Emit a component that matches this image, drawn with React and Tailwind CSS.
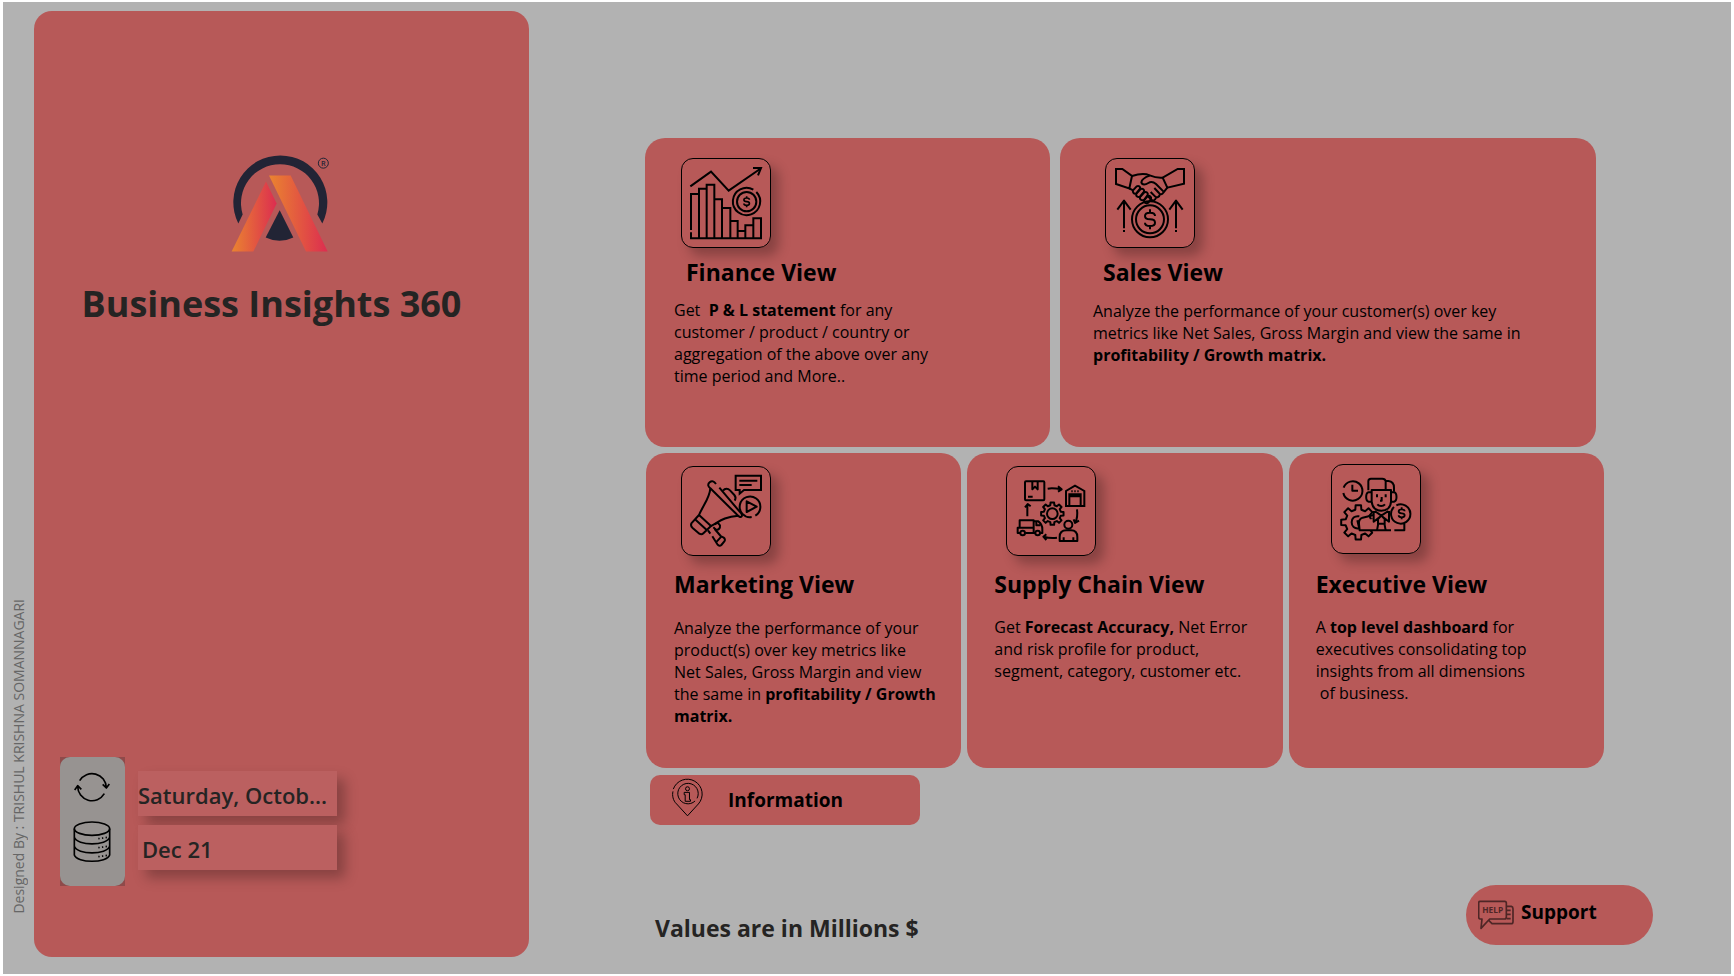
function gearPath(cx, cy, inner, outer, teeth) {
  const step = (Math.PI * 2) / teeth;
  const points = [];
  for (let i = 0; i < teeth; i += 1) {
    const a = i * step - Math.PI / 2;
    [
      [inner, -0.3],
      [outer, -0.2],
      [outer, 0.2],
      [inner, 0.3],
    ].forEach(([r, k]) => {
      points.push(`${(cx + r * Math.cos(a + k * step)).toFixed(1)} ${(cy + r * Math.sin(a + k * step)).toFixed(1)}`);
    });
  }
  return `M${points.join("L")}Z`;
}

const SUPPLY_GEAR = gearPath(172, 176, 26, 34, 8);
const EXEC_GEAR = gearPath(115, 202, 39, 52, 8);

function Glyph({ viewBox, children, className = "size-[88px]", strokeWidth = 6 }) {
  return (
    <svg
      viewBox={viewBox}
      className={className}
      fill="none"
      stroke="currentColor"
      strokeWidth={strokeWidth}
      strokeLinejoin="round"
      aria-hidden="true"
    >
      {children}
    </svg>
  );
}

function Dollar({ x, y, s = 1, w = 6 }) {
  return (
    <g transform={`translate(${x} ${y}) scale(${s})`} strokeWidth={w}>
      <path d="M15 -10C15 -17 9 -20 0 -20C-9 -20 -15 -16 -15 -10C-15 -3 -8 0 0 0C8 0 15 3 15 10C15 16 9 20 0 20C-9 20 -15 17 -15 10M0 -30V-20M0 20V30" />
    </g>
  );
}

function FinanceIcon() {
  return (
    <Glyph viewBox="36 27 264 264">
      <g strokeLinejoin="miter">
        <path d="M61 109L123 65L176 122L270 57" />
        <path d="M249 54H273L264 76" />
        <path d="M63 240V132H87M87 265V116H110M110 265V104H133V265M133 148H156V265M156 174H181V265M181 213H203V265M203 243H226M226 265V226H250M250 265V205H273V265H63V247" />
      </g>
      <path d="M250 119A41 41 0 1 0 259 126" />
      <circle cx="230" cy="155" r="29" />
      <Dollar x={230} y={155} s={0.55} w={9} />
    </Glyph>
  );
}

function SalesIcon() {
  return (
    <Glyph viewBox="33 27 264 264">
      <path strokeLinejoin="miter" d="M63 57H82L111 78L103 115L63 102Z" />
      <path strokeLinejoin="miter" d="M267 57H248L203 83L217 113L267 101Z" />
      <path d="M111 78C130 72 150 70 164 76C178 82 190 84 203 83" />
      <path d="M164 77C150 82 140 88 139 97C141 106 152 104 160 99C168 94 177 97 183 102L205 124" />
      <path d="M217 113L205 128C202 134 196 134 192 129L178 114M195 132C193 142 185 145 180 139L167 126M183 142C181 152 173 154 168 148L159 139" />
      <path d="M103 115L114 121" />
      <path d="M114 121L125 109C131 106 137 110 135 116L124 130C117 133 112 128 114 121Z" />
      <path d="M124 131L137 117C143 114 149 119 147 125L135 140C128 143 122 138 124 131Z" />
      <path d="M135 141L148 127C154 124 160 129 158 135L147 150C140 153 133 148 135 141Z" />
      <path d="M147 151L158 138C164 136 170 141 168 147L160 158C153 162 146 158 147 151Z" />
      <circle cx="165" cy="208" r="54" />
      <circle cx="165" cy="208" r="42" />
      <Dollar x={165} y={208} />
      <path d="M87 154V235M67 179L87 152L107 179M87 240V246M243 154V235M223 179L243 152L263 179M243 240V246" />
    </Glyph>
  );
}

function MarketingIcon() {
  return (
    <Glyph viewBox="36 36 264 264">
      <path strokeLinejoin="miter" d="M197 62H273V105H222L209 116V105H197Z" />
      <path d="M208 77H262M208 90H245" />
      <path d="M245 186A31 31 0 1 1 256 182" />
      <path d="M230 139L260 155L230 171Z" />
      <path d="M138 87C132 79 126 76 119 82C112 88 114 94 121 100L200 178C206 185 212 188 215 184C218 180 214 175 209 170L148 98" />
      <path d="M159 107C165 99 174 100 180 106L193 120C198 126 198 131 194 137" />
      <path d="M121 100C119 130 97 155 87 180L123 213C145 202 160 185 205 182" />
      <path d="M87 180L64 205C62 210 63 214 67 218L88 236C93 239 97 238 101 234L123 213M75 193L111 226" />
      <path d="M134 208L143 203L150 211C151 219 146 226 138 224L130 217" />
      <path d="M114 226L121 236M127 244L143 269C146 273 151 273 154 270L163 259C166 255 165 251 161 248L152 243L134 222M140 260L154 245" />
    </Glyph>
  );
}

function SupplyChainIcon() {
  return (
    <Glyph viewBox="36 36 264 264" strokeWidth={6}>
      <rect x="90" y="79" width="58" height="57" rx="3" />
      <path d="M112 80V103L120 95L128 103V80M99 125H113" />
      <path d="M158 101C170 99 182 100 199 103M189 94L200 103L189 110" />
      <path strokeLinejoin="miter" d="M213 153V108L240 92L268 108V153ZM223 153V118H257V153M223 124H257" />
      <path d="M229 109H233M238 109H242M247 109H251" />
      <path d="M246 163C248 178 247 190 241 203M236 193L240 204L252 197" />
      <circle cx="220" cy="209" r="12" />
      <path d="M194 258V246C194 232 203 226 214 226H228C239 226 247 232 247 246V258ZM206 247V258M235 247V258" />
      <path d="M186 248C172 250 160 249 146 245M154 238L145 245L154 255" />
      <path d="M97 184V150M90 157L98 147L107 154" />
      <path d="M76 234H68V218H118M74 218V196H116V234M91 234H120M116 199H130C138 205 142 213 142 222V234H136M124 199V211H136" />
      <circle cx="83" cy="234" r="7" />
      <circle cx="128" cy="234" r="7" />
      <path d={SUPPLY_GEAR} />
      <circle cx="172" cy="176" r="16" />
    </Glyph>
  );
}

function ExecutiveIcon() {
  return (
    <Glyph viewBox="36 30 264 264" strokeWidth={6}>
      <path d="M71 98A29 29 0 1 1 70 114M97 89V107H114" />
      <clipPath id="exec-gear">
        <path d="M55 140H160V192L116 196V228H160V262H55Z" />
      </clipPath>
      <path d={EXEC_GEAR} clipPath="url(#exec-gear)" />
      <path d="M118 184C103 182 95 190 95 202C95 214 103 222 117 220" />
      <path d="M145 106V79C145 74 148 71 153 71H187C193 71 196 74 197 78V102M197 78H205C216 79 222 87 222 98V110" />
      <path d="M155 105H213V140C212 158 200 167 184 167C168 167 157 158 155 140Z" />
      <path d="M155 112H146C136 114 136 138 146 140H155M213 112H222C232 114 232 138 222 140H213" />
      <path d="M171 118V127M197 118V127M185 126V137H180M172 148C178 155 189 155 195 148" />
      <path d="M161 168V200L184 182L207 200V168M164 168L184 182L205 168M184 182L174 192V210L171 226M184 182L194 192V210L197 226M176 206H192" />
      <path d="M161 180L128 188C119 191 116 198 117 207L119 226H213M119 226L112 196" />
      <path d="M222 156A29 29 0 1 0 229 151M253 205V226H223" />
      <Dollar x={245} y={175} s={0.6} w={9} />
    </Glyph>
  );
}

function Logo() {
  return (
    <svg viewBox="32 28 300 296" className="h-[99px] w-[100px]" role="img" aria-label="Company logo">
      <defs>
        <linearGradient id="leg-left">
          <stop offset="0" stopColor="#ea8430" />
          <stop offset="1" stopColor="#dc2d50" />
        </linearGradient>
        <linearGradient id="leg-right">
          <stop offset="0" stopColor="#ea8430" />
          <stop offset="1" stopColor="#dc2d50" />
        </linearGradient>
      </defs>
      <path fill="#222435" d="M54 236A141 141 0 1 1 306 236L291 209A117 117 0 1 0 67 209Z" />
      <path fill="url(#leg-left)" d="M34 320L137 110L169 176L99 320Z" />
      <path fill="url(#leg-right)" d="M146 92H211L322 320H257Z" />
      <path fill="#222435" d="M178 196L219 278Q178 298 136 278Z" />
      <circle cx="309" cy="55" r="15" fill="none" stroke="#222435" strokeWidth="3" />
      <text x="309" y="63" textAnchor="middle" fontSize="22" fontWeight="600" fill="#222435">
        R
      </text>
    </svg>
  );
}

function RefreshIcon() {
  return (
    <Glyph viewBox="0 0 108 96" className="h-8 w-9" strokeWidth={5}>
      <path d="M17 29A43 43 0 0 1 97 50M86 40L97 51L106 39" />
      <path d="M91 68A43 43 0 0 1 11 46M2 57L11 44L22 55" />
    </Glyph>
  );
}

function DatabaseIcon() {
  return (
    <Glyph viewBox="0 0 114 126" className="h-[42px] w-[38px]" strokeWidth={5}>
      <ellipse cx="57" cy="23" rx="53" ry="20" />
      <path d="M4 23V102C12 127 102 127 110 102V23M4 49C12 75 102 75 110 49M4 76C12 102 102 102 110 76" />
      <path strokeDasharray="4 7" d="M76 53L104 49M76 80L104 76M76 107L104 103" />
    </Glyph>
  );
}

function InfoPin() {
  return (
    <Glyph viewBox="0 0 100 120" className="h-10 w-[33px]" strokeWidth={3}>
      <path d="M7 33A45 45 0 1 1 83 78L50 114L17 78C6 68 3 52 6 40" />
      <path d="M79 61A31 31 0 1 0 73 69" />
      <circle cx="50" cy="32" r="6" />
      <path d="M40 43H56V65H59V70H43V50H40Z" />
    </Glyph>
  );
}

function HelpIcon() {
  return (
    <Glyph viewBox="0 0 108 90" className="h-[30px] w-9 text-[#4e2626]" strokeWidth={5}>
      <path d="M6 4H80Q85 4 85 9V51Q85 57 80 57H35L9 85L12 57H6Q2 56 2 51V9Q2 4 6 4Z" />
      <path d="M86 19H100Q105 20 105 26V65Q105 71 99 71H42L32 61M86 31H98M86 43H98M86 56H98" />
      <text x="44" y="40" textAnchor="middle" fontSize="25" fontWeight="700" fill="currentColor" stroke="none">
        HELP
      </text>
    </Glyph>
  );
}

function ViewCard({ href, title, icon, className, iconClass, titleClass, textClass, children }) {
  return (
    <a href={href} className={`flex min-w-0 flex-col items-start rounded-[20px] bg-[#b75958] text-black ${className}`}>
      <span
        className={`rounded-xl border border-black shadow-[8px_8px_12px_rgba(0,0,0,0.26)] ${iconClass}`}
      >
        {icon}
      </span>
      <h2 className={`text-[23px] leading-8 font-bold ${titleClass}`}>{title}</h2>
      <p className={`text-base leading-[22px] ${textClass}`}>{children}</p>
    </a>
  );
}

export default function App() {
  return (
    <div className="flex min-h-screen bg-white px-[3px] py-0.5 font-['Open_Sans','Noto_Sans',sans-serif]">
      <div className="flex flex-1 bg-[#b2b2b2]">
        <div className="flex w-[31px] shrink-0 items-end justify-center pb-[60px]">
          <p className="rotate-180 text-sm leading-5 whitespace-nowrap text-[#666666] [writing-mode:vertical-rl]">
            Designed By : TRISHUL KRISHNA SOMANNAGARI
          </p>
        </div>

        <aside className="mt-[9px] mb-[17px] flex w-[495px] shrink-0 flex-col rounded-[18px] bg-[#b75958] text-[#252423]">
          <div className="flex justify-center pt-[143px] pr-px">
            <Logo />
          </div>
          <h1 className="mt-6 pr-5 text-center text-4xl leading-[54px] font-bold">Business Insights 360</h1>

          <div className="mt-auto flex items-start gap-[13px] pb-[71px] pl-[26px]">
            <div className="bg-[#8f4a4a]">
              <div className="flex h-[129px] w-[65px] flex-col items-center rounded-[10px] bg-[#979391] pt-[14px] pr-0.5 text-black">
                <RefreshIcon />
                <div className="mt-[18px]">
                  <DatabaseIcon />
                </div>
              </div>
            </div>
            <div className="flex flex-col gap-[9px] pt-[14px] text-[22px] leading-[45px] font-semibold">
              <p className="h-[45px] w-[199px] bg-[#bb6060] pt-0.5 whitespace-nowrap shadow-[8px_8px_12px_rgba(0,0,0,0.26)]">
                Saturday, Octob...
              </p>
              <p className="h-[45px] w-[199px] bg-[#bb6060] pt-0.5 pl-1 shadow-[8px_8px_12px_rgba(0,0,0,0.26)]">
                Dec 21
              </p>
            </div>
          </div>
        </aside>

        <main className="flex min-w-0 flex-1 flex-col pt-[136px] pl-[116px]">
          <div className="flex gap-[10px] pr-[135px]">
            <ViewCard
              href="#finance"
              title="Finance View"
              icon={<FinanceIcon />}
              className="min-h-[309px] flex-[405] pt-5"
              iconClass="ml-9"
              titleClass="mt-2 ml-[41px]"
              textClass="mt-[11px] ml-[29px] max-w-[270px]"
            >
              Get &nbsp;<b>P &amp; L statement</b> for any customer / product / country or aggregation of the above
              over any time period and More..
            </ViewCard>
            <ViewCard
              href="#sales"
              title="Sales View"
              icon={<SalesIcon />}
              className="min-h-[309px] flex-[536] pt-5"
              iconClass="ml-[45px]"
              titleClass="mt-2 ml-[43px]"
              textClass="mt-3 ml-[33px] max-w-[436px]"
            >
              Analyze the performance of your customer(s) over key metrics like Net Sales, Gross Margin and view the
              same in <b>profitability / Growth matrix.</b>
            </ViewCard>
          </div>

          <div className="mt-1.5 flex gap-1.5 pr-[127px] pl-px">
            <ViewCard
              href="#marketing"
              title="Marketing View"
              icon={<MarketingIcon />}
              className="min-h-[315px] flex-1 pt-[13px]"
              iconClass="ml-[35px]"
              titleClass="mt-3 ml-7"
              textClass="mt-[17px] ml-7 max-w-[262px]"
            >
              Analyze the performance of your product(s) over key metrics like Net Sales, Gross Margin and view the
              same in <b>profitability / Growth matrix.</b>
            </ViewCard>
            <ViewCard
              href="#supply-chain"
              title="Supply Chain View"
              icon={<SupplyChainIcon />}
              className="min-h-[315px] flex-1 pt-[13px]"
              iconClass="ml-[39px]"
              titleClass="mt-3 ml-[27px]"
              textClass="mt-4 ml-[27px] max-w-[260px]"
            >
              Get <b>Forecast Accuracy,</b> Net Error and risk profile for product, segment, category, customer etc.
            </ViewCard>
            <ViewCard
              href="#executive"
              title="Executive View"
              icon={<ExecutiveIcon />}
              className="min-h-[315px] flex-1 pt-[11px]"
              iconClass="ml-[42px]"
              titleClass="mt-[14px] ml-[27px]"
              textClass="mt-4 ml-[27px] max-w-[230px]"
            >
              A <b>top level dashboard</b> for executives consolidating top insights from all dimensions
              <br />
              &nbsp;of business.
            </ViewCard>
          </div>

          <button
            type="button"
            className="mt-[7px] ml-[5px] flex h-[50px] w-[270px] items-center gap-6 rounded-[10px] bg-[#b75958] pl-[21px] text-[19px] font-bold text-black"
          >
            <span className="pb-1">
              <InfoPin />
            </span>
            Information
          </button>

          <div className="mt-[60px] flex items-start justify-between pr-[78px] pl-[10px]">
            <p className="pt-[27px] text-[23px] leading-8 font-bold text-[#252423]">Values are in Millions $</p>
            <button
              type="button"
              className="flex h-[60px] w-[187px] items-center gap-[7px] rounded-full bg-[#b75958] pl-3 text-[19px] font-bold text-black"
            >
              <HelpIcon />
              <span className="pb-1.5">Support</span>
            </button>
          </div>
        </main>
      </div>
    </div>
  );
}
